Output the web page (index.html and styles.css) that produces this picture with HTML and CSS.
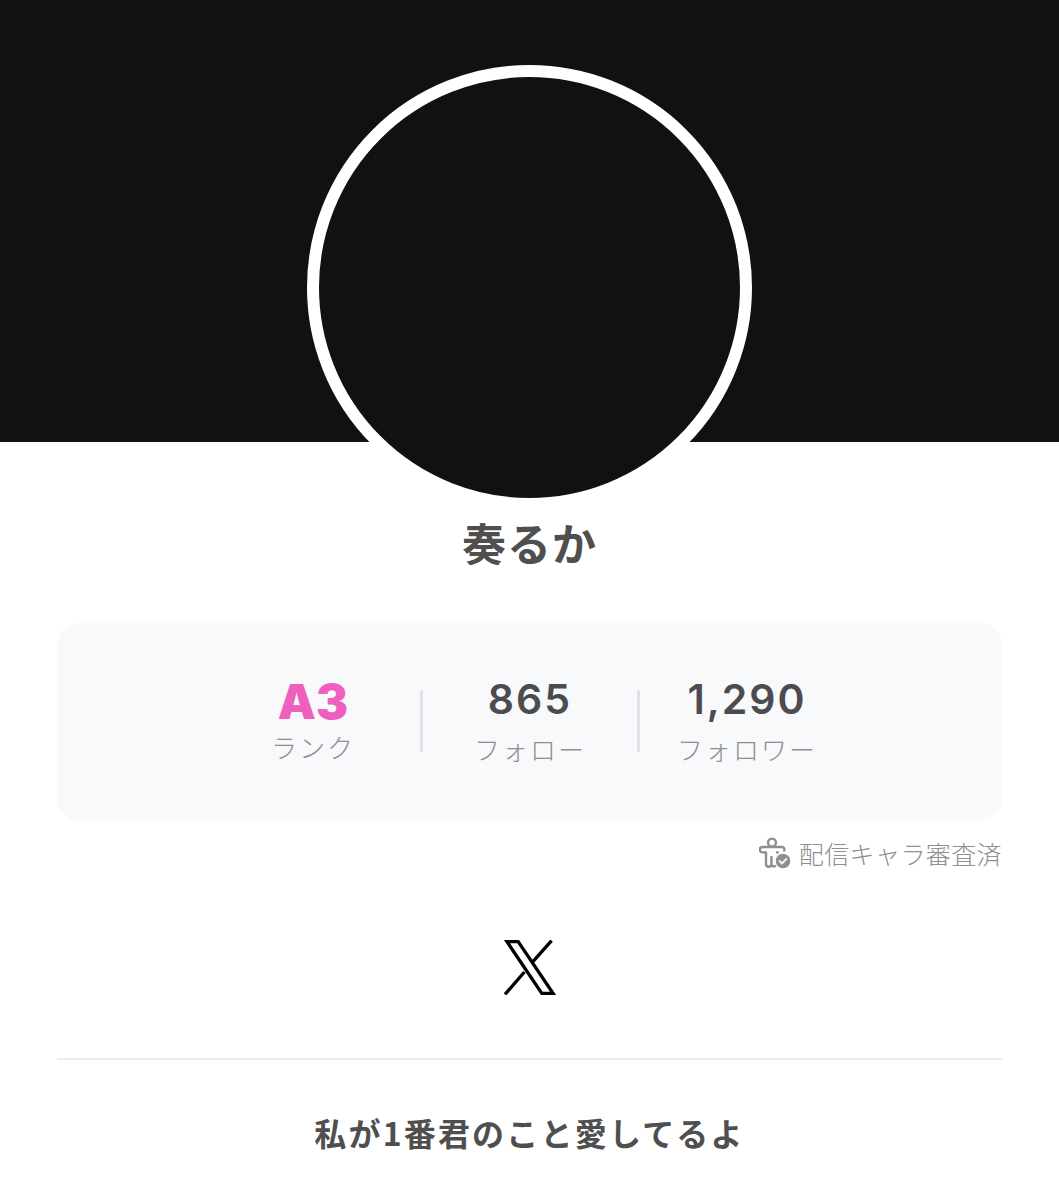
FILE: index.html
```html
<!DOCTYPE html>
<html lang="ja">
<head>
<meta charset="utf-8">
<title>奏るか</title>
<link rel="stylesheet" href="styles.css">
</head>
<body>
<div class="banner"></div>
<main class="profile">
  <div class="avatar"></div>
  <h1 class="name">奏るか</h1>
  <section class="stats">
    <div class="stat">
      <div class="value rank">A3</div>
      <div class="label">ランク</div>
    </div>
    <div class="stat">
      <div class="value">865</div>
      <div class="label">フォロー</div>
    </div>
    <div class="stat">
      <div class="value">1,290</div>
      <div class="label">フォロワー</div>
    </div>
  </section>
  <div class="verified">
    <svg class="verified-icon" viewBox="0 0 32 32" width="32" height="32" aria-hidden="true">
      <circle cx="13" cy="5.6" r="4" fill="none" stroke="#8e8e93" stroke-width="2.4"/>
      <path d="M8.5 10H3.5a2.4 2.4 0 0 0 0 5.4H7V27a2.7 2.7 0 0 0 5.4 0V20M12.4 27a2.7 2.7 0 0 0 5.2 0.6M18 15.4h1M17.5 10h5.5a2.4 2.4 0 0 1 2.2 3.4M8.5 10h9" fill="none" stroke="#8e8e93" stroke-width="2.4" stroke-linecap="round" stroke-linejoin="round"/>
      <circle cx="24" cy="24" r="8" fill="#8e8e93" stroke="#fff" stroke-width="1.4"/>
      <path d="M20.5 24l2.5 2.5 4.3-4.5" fill="none" stroke="#f4f4f6" stroke-width="1.9" stroke-linecap="round" stroke-linejoin="round"/>
    </svg>
    <span>配信キャラ審査済</span>
  </div>
  <a class="social" href="#" aria-label="X">
    <svg viewBox="0 0 52 55" width="52" height="55" aria-hidden="true">
      <path fill="none" stroke="#000" stroke-width="3.3" stroke-linejoin="miter" d="M3 1.7H14.2L49 53.3H37.8ZM47.6 0.6L28 22.6M20.4 32L1 54.4"/>
    </svg>
  </a>
  <hr class="divider">
  <p class="bio">私が1番君のこと愛してるよ</p>
</main>
</body>
</html>
```
FILE: styles.css
```css
* { box-sizing: border-box; }
html, body { margin: 0; padding: 0; background: #fff; }
body {
  width: 1059px;
  height: 1200px;
  overflow: hidden;
  font-family: "Inter", "Noto Sans CJK JP", sans-serif;
  color: #4f4f52;
}
.banner { height: 442px; background: #111112; }
.profile {
  display: flex;
  flex-direction: column;
  align-items: center;
  padding: 0 57px;
}
.avatar {
  width: 445px;
  height: 445px;
  margin-top: -377px;
  border: 12px solid #fff;
  border-radius: 50%;
  background: #111112;
  flex: none;
}
.name {
  margin: -3px 0 0;
  font-family: "Noto Sans CJK JP", sans-serif;
  font-size: 44px;
  line-height: 70px;
  font-weight: 700;
  color: #4f4f4f;
  letter-spacing: 1px;
}
.stats {
  width: 945px;
  height: 198px;
  margin-top: 46px;
  padding: 51px 2px 0 0;
  background: #f8f9fb;
  border-radius: 22px;
  display: flex;
  justify-content: center;
  align-items: flex-start;
}
.stat {
  width: 217px;
  height: 62px;
  display: flex;
  flex-direction: column;
  align-items: center;
  border-left: 3px solid transparent;
}
.stat + .stat { border-left: 3px solid #e1e2e7; margin-top: 16px; }
.stat + .stat .value { margin-top: -16px; }
.value {
  font-size: 41px;
  line-height: 50px;
  font-weight: 600;
  letter-spacing: 2px;
  color: #4c4c50;
}
.rank {
  margin-top: 3px;
  font-weight: 900;
  font-size: 48px;
  color: #ef5fbe;
  letter-spacing: 0;
}
.label {
  font-family: "Noto Sans CJK JP", sans-serif;
  font-size: 26px;
  line-height: 38px;
  color: #8e8e93;
  letter-spacing: 2px;
  font-weight: 300;
}
.rank + .label { margin-top: 1px; }
.stat + .stat .label { margin-top: 6px; }
.verified {
  align-self: flex-end;
  margin-top: 16px;
  display: flex;
  align-items: center;
  gap: 8px;
  font-family: "Noto Sans CJK JP", sans-serif;
  font-size: 25px;
  line-height: 32px;
  font-weight: 300;
  letter-spacing: 0.4px;
  color: #8e8e93;
}
.verified-icon { flex: none; }
.social {
  display: block;
  width: 52px;
  height: 55px;
  margin-top: 71px;
}
.social svg { display: block; }
.divider {
  width: 100%;
  height: 2px;
  margin: 63px 0 0;
  border: 0;
  background: #ececee;
}
.bio {
  margin: 49px 0 0;
  font-family: "Noto Sans CJK JP", sans-serif;
  font-size: 32px;
  line-height: 46px;
  font-weight: 700;
  color: #4f4f4f;
  letter-spacing: 2.2px;
}
```
